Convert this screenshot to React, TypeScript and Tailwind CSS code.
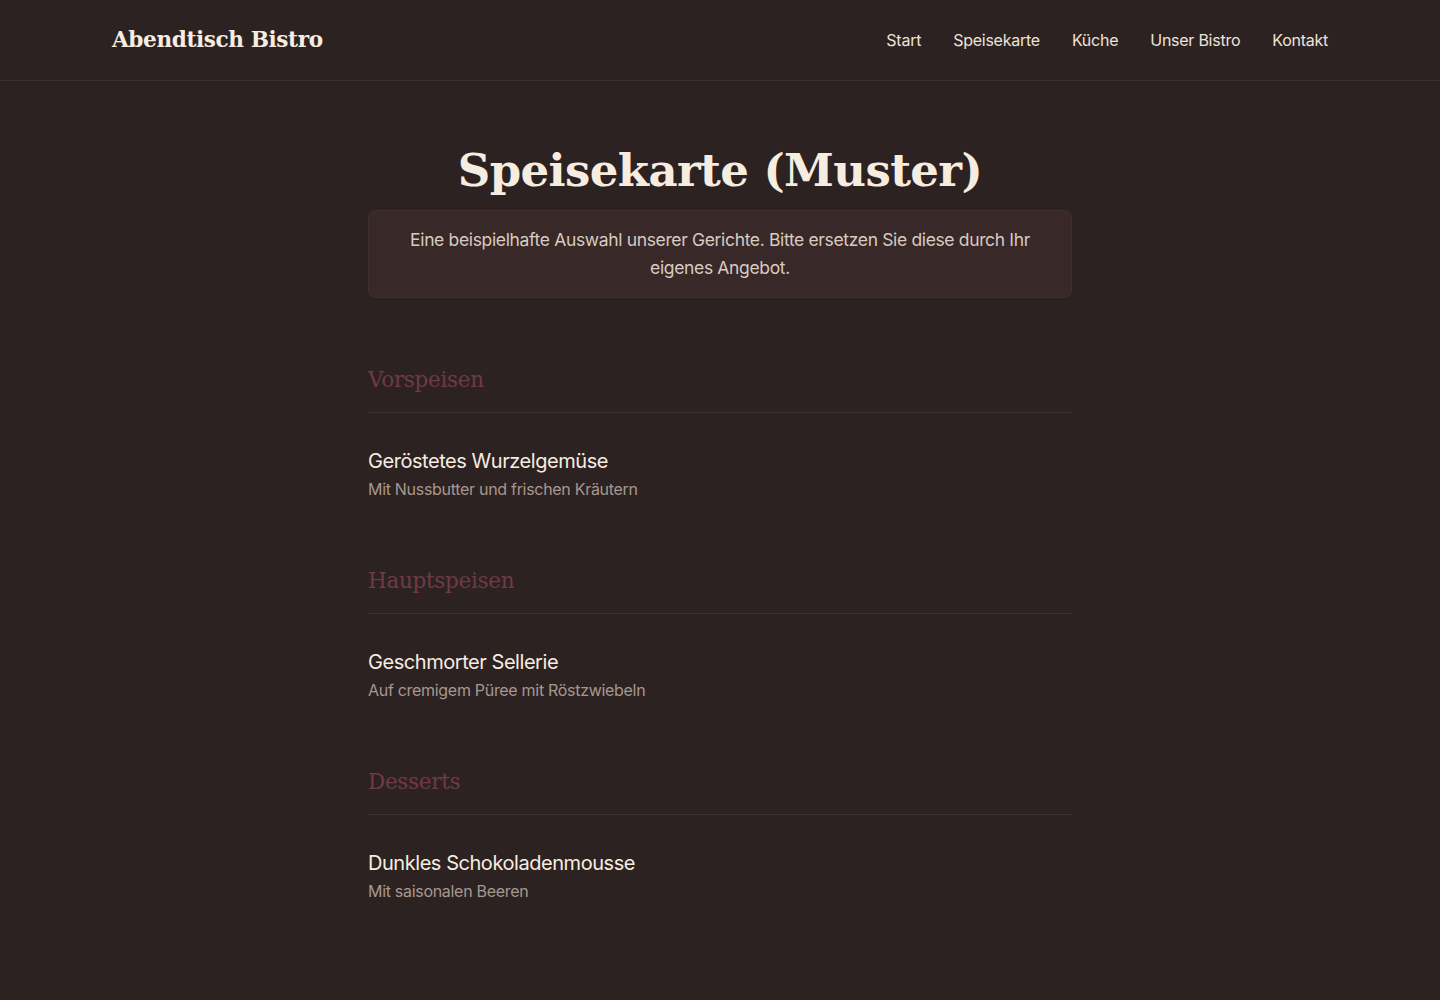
import React from 'react';

const NAV = ['Start', 'Speisekarte', 'Küche', 'Unser Bistro', 'Kontakt'];

const MENU = [
  { title: 'Vorspeisen', dish: 'Geröstetes Wurzelgemüse', note: 'Mit Nussbutter und frischen Kräutern' },
  { title: 'Hauptspeisen', dish: 'Geschmorter Sellerie', note: 'Auf cremigem Püree mit Röstzwiebeln' },
  { title: 'Desserts', dish: 'Dunkles Schokoladenmousse', note: 'Mit saisonalen Beeren' },
];

const serif = "font-['DejaVu_Serif',Georgia,serif]";

export default function App() {
  return (
    <div className="min-h-screen bg-[#2d2222] font-['Inter',sans-serif] text-[#f3e9dc]">
      {/* Header */}
      <header className="border-b border-[#3b2e2e]">
        <div className="mx-auto flex h-20 max-w-[1216px] items-center justify-between">
          <a className={`${serif} text-[21.6px] font-bold tracking-[-0.4px] text-[#f6ede0]`}>Abendtisch Bistro</a>
          <nav className="flex items-center gap-8 text-[16px] tracking-[-0.25px] text-[#eee3d6]">
            {NAV.map((n) => (
              <a key={n}>{n}</a>
            ))}
          </nav>
        </div>
      </header>

      <main className="mx-auto w-[704px] pt-[58px] pb-[60px]">
        <h1 className={`${serif} text-center text-[45px] font-bold leading-[64px] tracking-[-0.6px] text-[#f6ede0]`}>
          Speisekarte (Muster)
        </h1>
        <div className="mt-[7px] rounded-lg border border-[#3f3030] bg-[#382828] px-8 py-[15px] text-center text-[17.5px] leading-[28px] tracking-[-0.35px] text-[#d9cbc0]">
          Eine beispielhafte Auswahl unserer Gerichte. Bitte ersetzen Sie diese durch Ihr eigenes Angebot.
        </div>

        <div className="mt-[64px] flex flex-col gap-[62px]">
          {MENU.map((s) => (
            <section key={s.title}>
              <h2 className={`${serif} border-b border-[#3d3030] pb-[14px] text-[21.5px] leading-[36px] tracking-[-0.3px] text-[#6f3a46]`}>
                {s.title}
              </h2>
              <div className="pt-[34px]">
                <h3 className="text-[20px] leading-[28px] font-normal tracking-[-0.45px] text-[#f6ede0]">{s.dish}</h3>
                <p className="mt-[2px] text-[16px] leading-[24px] tracking-[-0.3px] text-[#a6988f]">{s.note}</p>
              </div>
            </section>
          ))}
        </div>
      </main>
    </div>
  );
}
